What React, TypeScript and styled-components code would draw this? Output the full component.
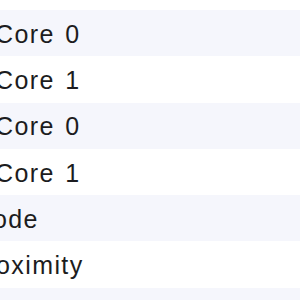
import React from 'react';
import styled, { createGlobalStyle } from 'styled-components';

const GlobalStyle = createGlobalStyle`
  html, body {
    margin: 0;
    padding: 0;
    background: #ffffff;
    overflow: hidden;
  }
`;

const Viewport = styled.div`
  width: 300px;
  height: 300px;
  overflow: hidden;
`;

const List = styled.div`
  display: flex;
  flex-direction: column;
  margin-top: -36.3px;
`;

const Row = styled.div<{ striped: boolean }>`
  flex: 0 0 46.3px;
  display: flex;
  align-items: center;
  background: ${({ striped }) => (striped ? '#f5f6fc' : '#ffffff')};
`;

const Label = styled.span<{ shift: number }>`
  margin-left: ${({ shift }) => shift}px;
  padding-top: 2px;
  font-family: 'Liberation Sans', Arial, sans-serif;
  font-size: 25px;
  letter-spacing: 1.4px;
  word-spacing: 2px;
  color: #1c1c20;
  white-space: nowrap;
`;

const items = [
  { text: '', shift: 0 },
  { text: 'Core 0', shift: -5 },
  { text: 'Core 1', shift: -5 },
  { text: 'Core 0', shift: -5 },
  { text: 'Core 1', shift: -5 },
  { text: 'ode', shift: -7 },
  { text: 'oximity', shift: -4 },
  { text: '', shift: 0 },
];

const App: React.FC = () => (
  <>
    <GlobalStyle />
    <Viewport>
      <List>
        {items.map((item, i) => (
          <Row key={i} striped={i % 2 === 1}>
            <Label shift={item.shift}>{item.text}</Label>
          </Row>
        ))}
      </List>
    </Viewport>
  </>
);

export default App;
